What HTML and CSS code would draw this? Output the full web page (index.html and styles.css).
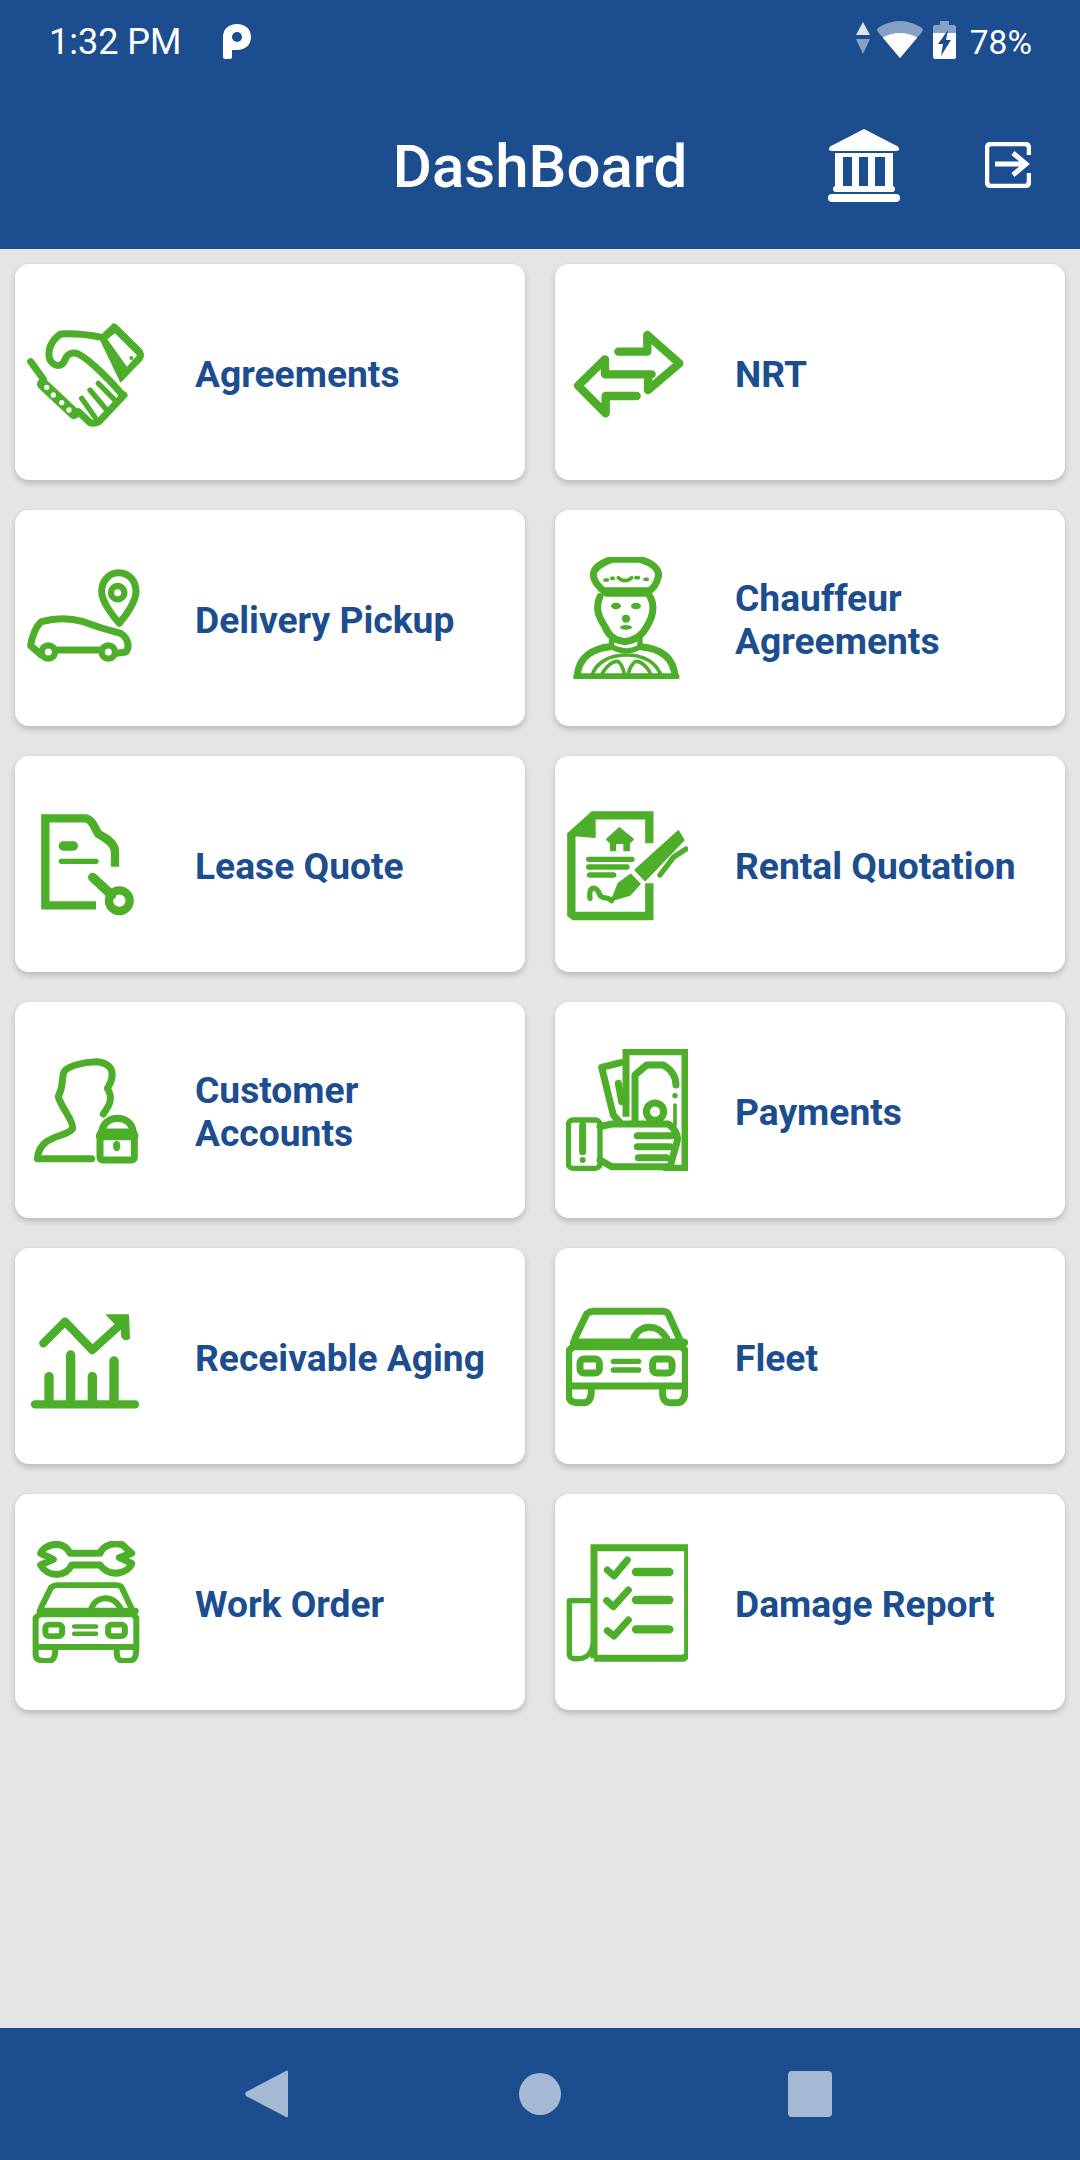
FILE: index.html
```html
<!DOCTYPE html>
<html lang="en">
<head>
  <meta charset="UTF-8">
  <meta name="viewport" content="width=device-width, initial-scale=1.0">
  <title>DashBoard</title>
  <link rel="stylesheet" href="styles.css">
</head>
<body>

<header class="appHeader">
  <div class="statusBar">
    <span class="clock">1:32 PM</span>
    <svg class="parkIcon" viewBox="0 0 30 36"><path d="M1 34V14C1 6 7 1 15 1s14 5 14 13-6 13-14 13h-5v7c0 1-1 2-2 2H3c-1 0-2-1-2-2z" fill="#fff"/><circle cx="15" cy="14" r="5" fill="#1c4e8f"/></svg>
    <div class="statusRight">
      <svg class="dataIcon" viewBox="0 0 14 32"><path d="M7 0l7 13H0z" fill="#dfe3ea"/><path d="M7 32L0 17h14z" fill="#8aa0bf"/></svg>
      <svg class="wifiIcon" viewBox="0 0 46 37"><path d="M23 37L1 11c-1-1-1-3 0-4C7 3 15 0 23 0s16 3 22 7c1 1 1 3 0 4z" fill="#86a1c8"/><path d="M23 37L7 18c-1-1-1-2 0-2 4-2 10-4 16-4s12 2 16 4c1 0 1 1 0 2z" fill="#fff"/></svg>
      <svg class="batteryIcon" viewBox="0 0 23 38"><path d="M7 0h9v4h5c1 0 2 1 2 2v9H0V6c0-1 1-2 2-2h5z" fill="#86a1c8"/><path d="M0 12h23v24c0 1-1 2-2 2H2c-1 0-2-1-2-2z" fill="#fff"/><path d="M15 9L5 23h5l-2 12 10-16h-5z" fill="#1c4e8f"/></svg>
      <span class="battery">78%</span>
    </div>
  </div>
  <div class="titleBar">
    <h1>DashBoard</h1>
    <!-- bank and logout buttons sit over the centred title row -->
    <svg class="bankIcon" viewBox="0 0 72 73"><path d="M36 0L69 17c3 2 3 5-1 5H4c-4 0-4-3-1-5z" fill="#fff"/><path d="M7 24h58v4h-58zM7 28h8v30H7zM24 28h7v30h-7zM40 28h7v30h-7zM57 28h8v30h-8z" fill="#fff"/><rect x="5" y="57" width="62" height="6" rx="3" fill="#fff"/><rect x="0" y="65" width="72" height="8" rx="4" fill="#fff"/></svg>
    <svg class="exitIcon" viewBox="0 0 46 46"><path d="M44 13V6Q44 2 40 2H6Q2 2 2 6V40Q2 44 6 44H40Q44 44 44 40V31" fill="none" stroke="#fff" stroke-width="4.5"/><path d="M10 22H42M28 11L41 22L28 33" fill="none" stroke="#fff" stroke-width="5"/></svg>
  </div>
</header>

<main class="menuGrid">

  <a class="menuCard">
    <svg class="menuIcon" viewBox="78 93 366 366">
      <path d="M305 172C270 165 220 160 182 162C155 180 140 210 150 240C165 262 185 262 195 240C200 222 215 215 235 222C270 240 330 300 368 345"/>
      <path d="M340 132Q346 132 352 138L425 210Q435 225 425 240L362 305L298 172z" class="solid"/>
      <path d="M345 160L411 226L381 260L322 178z" class="gap"/>
      <path d="M92 245L130 297"/>
      <path d="M128 312L222 400" class="thick"/>
      <path d="M235 395L270 428C282 432 295 428 300 422L372 345"/>
      <path d="M245 355L285 412M270 330L322 392M295 310L352 368" class="thin"/>
      <circle cx="394" cy="234" r="6" class="dot"/>
      <circle cx="140" cy="322" r="8" class="gap"/><circle cx="160" cy="345" r="8" class="gap"/><circle cx="185" cy="368" r="8" class="gap"/><circle cx="207" cy="390" r="8" class="gap"/>
    </svg>
    <span class="menuLabel">Agreements</span>
  </a>

  <a class="menuCard">
    <svg class="menuIcon" viewBox="48 93 366 366">
      <path d="M205 215H292V165L388 250L294 330V283H165M305 283H165V238L84 317L167 400V348H260" class="bold"/>
    </svg>
    <span class="menuLabel">NRT</span>
  </a>

  <a class="menuCard">
    <svg class="menuIcon" viewBox="78 831 366 366">
      <path d="M355 878C390 878 408 905 408 935C408 965 375 1010 358 1030C340 1010 305 965 305 935C305 905 325 878 355 878Z"/>
      <circle cx="353" cy="938" r="20" class="ring"/>
      <path d="M122 1124L92 1097C95 1070 110 1035 125 1025C170 1012 215 1015 250 1025C290 1040 330 1052 362 1060C385 1075 390 1100 378 1116L348 1120M165 1110H305"/>
      <circle cx="145" cy="1116" r="20" class="ring"/><circle cx="325" cy="1116" r="20" class="ring"/>
    </svg>
    <span class="menuLabel">Delivery Pickup</span>
  </a>

  <a class="menuCard">
    <svg class="menuIcon" viewBox="48 831 366 366">
      <path d="M185 838H270C310 850 330 870 325 890C320 915 305 930 290 940H170C150 925 130 905 130 885C130 865 155 848 185 838Z"/>
      <path d="M165 932H290"/>
      <path d="M165 900H172M185 895H190M205 893C215 905 235 905 245 893M258 893H265M285 898H292" class="fine"/>
      <path d="M150 950C135 985 145 1010 165 1040C175 1065 190 1080 225 1085C260 1080 280 1060 290 1040C310 1010 315 975 300 950"/>
      <path d="M185 1070V1100Q228 1125 270 1100V1070" class="thin"/>
      <ellipse cx="198" cy="978" rx="15" ry="10" class="dot"/><ellipse cx="258" cy="978" rx="15" ry="10" class="dot"/>
      <circle cx="228" cy="1016" r="12" class="dot"/><ellipse cx="228" cy="1042" rx="18" ry="7" class="dot"/>
      <path d="M82 1188C85 1130 130 1105 180 1100M375 1188C370 1130 330 1105 272 1100M80 1190H378"/>
      <path d="M125 1190C135 1150 175 1125 228 1125C285 1125 320 1150 335 1190M152 1190C165 1160 190 1140 205 1145C220 1155 222 1180 225 1190M232 1190C235 1180 240 1155 255 1145C270 1140 295 1160 305 1190" class="fine"/>
    </svg>
    <span class="menuLabel">Chauffeur<br>Agreements</span>
  </a>

  <a class="menuCard">
    <svg class="menuIcon" viewBox="78 69 366 366">
      <path d="M288 376H136V115H255C275 115 282 140 295 162C320 175 345 190 345 215V260" class="bold butt"/>
      <path d="M190 198H220" class="pill"/>
      <path d="M184 244H288" class="thin"/>
      <path d="M278 292L335 345" class="pill"/>
      <circle cx="358" cy="362" r="31" class="bold"/>
    </svg>
    <span class="menuLabel">Lease Quote</span>
  </a>

  <a class="menuCard">
    <svg class="menuIcon" viewBox="48 69 366 366">
      <path d="M298 190V106H130L64 165V402L72 408H298V310" class="bold butt"/>
      <path d="M135 95L55 165L135 172z" class="solid"/>
      <path d="M208 143L250 178L238 190V212H222V190H196V212H182V190L170 178z" class="solid"/>
      <path d="M116 238H246M116 261H231M119 285H191" class="thin"/>
      <path d="M120 355C115 320 135 318 145 335C155 365 170 345 185 362" class="thin"/>
      <path d="M255 270L385 152L402 180L285 302zM184 362L205 310L242 283L270 312L240 345z" class="solid"/>
      <path d="M330 285L370 232L408 207" class="thin"/>
    </svg>
    <span class="menuLabel">Rental Quotation</span>
  </a>

  <a class="menuCard">
    <svg class="menuIcon" viewBox="78 807 366 366">
      <path d="M310 1002C320 985 345 960 322 925C345 890 345 850 290 845C250 845 195 860 190 880C185 905 190 920 175 950C185 985 220 1020 218 1045C200 1075 120 1060 112 1136H275"/>
      <path d="M305 1058C310 1000 395 1000 400 1058"/>
      <rect x="300" y="1056" width="103" height="84" rx="8"/>
      <path d="M300 1068H403" class="bold"/>
      <ellipse cx="350" cy="1098" rx="11" ry="16" class="dot"/>
    </svg>
    <span class="menuLabel">Customer<br>Accounts</span>
  </a>

  <a class="menuCard">
    <svg class="menuIcon" viewBox="48 807 366 366">
      <path d="M228 1010V815H405V1165H340" class="butt"/>
      <path d="M255 1020V885L290 855H340C365 870 378 890 378 915"/>
      <circle cx="375" cy="947" r="8" class="dot"/>
      <circle cx="315" cy="995" r="26"/>
      <path d="M375 975V1035" class="fine"/>
      <path d="M212 848L155 862L190 1005L210 1028M205 910L215 965"/>
      <rect x="55" y="1020" width="95" height="145" rx="14" class="thin"/>
      <path d="M98 1036V1115"/>
      <circle cx="98" cy="1140" r="9" class="dot"/>
      <path d="M150 1040L185 1032H355C375 1045 388 1070 380 1090L360 1160H185L150 1140"/>
      <path d="M262 1067H365M262 1100H360M265 1133H350"/>
    </svg>
    <span class="menuLabel">Payments</span>
  </a>

  <a class="menuCard">
    <svg class="menuIcon" viewBox="78 15 366 366">
      <path d="M130 160L195 95L277 180L368 97" class="bold"/>
      <path d="M320 75H385L388 145Q375 155 365 140V100L345 100Z" class="solid"/>
      <path d="M147 260V340M212 195V340M277 260V340M342 213V340" class="pill"/>
      <path d="M105 343H405" class="bold"/>
    </svg>
    <span class="menuLabel">Receivable Aging</span>
  </a>

  <a class="menuCard">
    <svg class="menuIcon" viewBox="48 15 366 366">
      <use href="#carFront"/>
    </svg>
    <span class="menuLabel">Fleet</span>
  </a>

  <a class="menuCard">
    <svg class="menuIcon" viewBox="78 753 366 366">
      <path d="M210 790H300C310 765 345 755 368 765L395 790L358 803L395 820C385 850 330 865 300 825H215C195 865 140 860 122 825L160 808L122 790C130 765 190 745 210 790Z"/>
      <g transform="translate(58.6 832.5) scale(0.863 0.828)"><use href="#carFront"/></g>
    </svg>
    <span class="menuLabel">Work Order</span>
  </a>

  <a class="menuCard">
    <svg class="menuIcon" viewBox="48 753 366 366">
      <path d="M132 1105V773H413V1095L400 1105H132" class="butt"/>
      <path d="M132 932H58V1095Q60 1110 95 1105Q125 1100 132 1050" class="thin"/>
      <path d="M172 840L192 858L232 810M170 932L190 950L235 900M172 1022L192 1038L235 990"/>
      <path d="M258 846H358M258 930H358M258 1018H358" class="bold"/>
    </svg>
    <span class="menuLabel">Damage Report</span>
  </a>

</main>

<footer class="navBar">
  <svg class="navBack" viewBox="0 0 43 48"><path d="M41 1L1 22c-1 1-1 3 0 4l40 21c1 1 2 0 2-1V2c0-1-1-2-2-1z"/></svg>
  <span class="navHome"></span>
  <span class="navRecent"></span>
</footer>

<!-- front view of a car, used by Fleet and Work Order -->
<svg class="defs" width="0" height="0">
  <defs>
    <g id="carFront">
      <path d="M75 145L110 72Q120 64 130 64H335Q350 64 355 72L390 150"/>
      <path d="M72 158H402" class="bold"/>
      <path d="M250 148C265 105 320 95 350 145"/>
      <path d="M70 170H395L406 182V288H56V182z"/>
      <rect x="90" y="207" width="58" height="42" rx="12"/>
      <rect x="308" y="207" width="58" height="42" rx="12"/>
      <path d="M190 214H266M190 240H266" class="thin"/>
      <path d="M56 296V320Q60 338 85 338H105Q124 335 124 300M338 300Q335 338 360 338H385Q406 335 406 296"/>
    </g>
  </defs>
</svg>

</body>
</html>
```
FILE: styles.css
```css
* {
  box-sizing: border-box;
}

html, body {
  height: 100%;
}

body {
  margin: 0;
  font-family: Roboto, "Liberation Sans", sans-serif;
  background-color: #e5e5e5;
  display: flex;
  flex-direction: column;
  min-height: 2160px;
}

.appHeader {
  background-color: #1c4e8f;
  color: #fff;
  height: 249px;
  flex-shrink: 0;
}

.statusBar {
  display: flex;
  align-items: center;
  height: 84px;
  padding: 0 48px 0 49px;
}

.clock {
  font-size: 36px;
  width: 173px;
}

.parkIcon {
  width: 30px;
  height: 36px;
  margin-top: -2px;
}

.statusRight {
  margin-left: auto;
  display: flex;
  align-items: center;
}

.dataIcon {
  width: 14px;
  height: 32px;
  margin-right: 7px;
  margin-top: -8px;
}

.wifiIcon {
  width: 46px;
  height: 37px;
  margin-right: 10px;
  margin-top: -6px;
}

.batteryIcon {
  width: 23px;
  height: 38px;
  margin-right: 14px;
  margin-top: -4px;
}

.battery {
  font-size: 33.5px;
}

.titleBar {
  position: relative;
  height: 165px;
  display: flex;
  justify-content: center;
}

.titleBar h1 {
  margin: 0;
  font-size: 60px;
  font-weight: 500;
  line-height: 70px;
  padding-top: 48px;
}

.bankIcon {
  position: absolute;
  left: 828px;
  top: 45px;
  width: 72px;
  height: 73px;
}

.exitIcon {
  position: absolute;
  left: 985px;
  top: 58px;
  width: 46px;
  height: 46px;
}

.menuGrid {
  display: grid;
  grid-template-columns: 510px 510px;
  grid-auto-rows: 216px;
  gap: 30px;
  padding: 15px;
  flex: 1;
  align-content: start;
}

.menuCard {
  display: flex;
  align-items: center;
  background-color: #fff;
  border-radius: 14px;
  box-shadow: 0 3px 6px rgba(0, 0, 0, 0.2);
  padding-left: 11px;
}

.menuIcon {
  width: 122px;
  height: 122px;
  flex-shrink: 0;
  margin-right: 47px;
}

.menuLabel {
  font-size: 37.2px;
  font-weight: 700;
  line-height: 43px;
  color: #1c4e8f;
  padding-top: 4px;
}

/* icon strokes, the viewBox units are 1/3 px */
.menuIcon, .defs {
  fill: none;
  stroke: #4cae29;
  stroke-width: 21;
  stroke-linecap: round;
  stroke-linejoin: round;
}

.menuIcon .bold, .defs .bold { stroke-width: 25; }
.menuIcon .thin, .defs .thin { stroke-width: 16; }
.menuIcon .fine { stroke-width: 11; }
.menuIcon .thick { stroke-width: 34; }
.menuIcon .pill { stroke-width: 28; }
.menuIcon .ring { stroke-width: 19; fill: #fff; }
.menuIcon .butt { stroke-linecap: butt; stroke-linejoin: miter; }
.menuIcon .solid { fill: #4cae29; stroke-width: 4; }
.menuIcon .dot { fill: #4cae29; stroke: none; }
.menuIcon .gap { fill: #fff; stroke: none; }

.navBar {
  background-color: #1c4e8f;
  height: 132px;
  flex-shrink: 0;
  position: relative;
  display: flex;
  align-items: center;
}

.navBack {
  position: absolute;
  left: 245px;
  top: 42px;
  width: 43px;
  height: 48px;
  fill: #a6b9d4;
}

.navHome {
  position: absolute;
  left: 519px;
  top: 45px;
  width: 42px;
  height: 42px;
  border-radius: 50%;
  background-color: #a6b9d4;
}

.navRecent {
  position: absolute;
  left: 788px;
  top: 43px;
  width: 44px;
  height: 46px;
  border-radius: 4px;
  background-color: #a6b9d4;
}

.defs {
  position: absolute;
}
```
